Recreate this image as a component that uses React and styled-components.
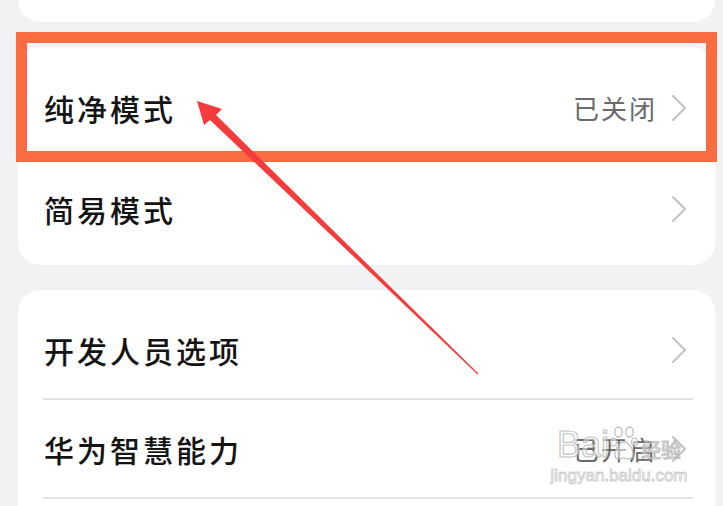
import React from "react";
import styled, { createGlobalStyle } from "styled-components";

const Global = createGlobalStyle`
  html, body { margin: 0; padding: 0; }
  body {
    background: #f1f2f4;
    font-family: "Noto Sans CJK SC", "Noto Sans", sans-serif;
    overflow: hidden;
  }
`;

const Page = styled.div`
  position: relative;
  width: 723px;
  height: 506px;
  overflow: hidden;
  background: #f1f2f4;
  box-sizing: border-box;
  padding: 0 8px 0 18px;
  display: flex;
  flex-direction: column;
  gap: 25px;
`;

const Card = styled.div`
  background: #ffffff;
  border-radius: ${(p) => (p.$cut ? "0 0 22px 22px" : "22px")};
  height: ${(p) => (p.$h ? `${p.$h}px` : "auto")};
  padding: ${(p) => p.$pad || "0"};
  flex-shrink: 0;
  display: flex;
  flex-direction: column;
`;

const Row = styled.div`
  height: ${(p) => p.$h}px;
  display: flex;
  align-items: center;
  padding: 0 28px 0 26px;
  box-sizing: border-box;
`;

const Label = styled.span`
  flex: 1;
  font-size: 30px;
  letter-spacing: 3px;
  color: #141414;
  font-weight: 500;
`;

const Value = styled.span`
  font-size: 26px;
  letter-spacing: 2px;
  color: #6a6a6a;
  margin-right: 14px;
`;

const Divider = styled.div`
  height: 2px;
  background: #e4e4e4;
  margin: 0 22px 0 25px;
`;

const Spacer = styled.div`
  height: 60px;
`;

const Chevron = () => (
  <svg width="16" height="28" viewBox="0 0 16 28" style={{ display: "block" }}>
    <path d="M2 2 L14 14 L2 26" fill="none" stroke="#c2c2c2" strokeWidth="2" strokeLinecap="round" strokeLinejoin="round" />
  </svg>
);

const Highlight = styled.div`
  position: absolute;
  left: 16px;
  top: 32px;
  width: 701px;
  height: 130px;
  box-sizing: border-box;
  border: 11px solid #f96b40;
  pointer-events: none;
`;

const ArrowSvg = styled.svg`
  position: absolute;
  left: 0;
  top: 0;
  pointer-events: none;
`;

const Watermark = styled.div`
  position: absolute;
  left: 553px;
  top: 426px;
  width: 132px;
  display: flex;
  flex-direction: column;
  align-items: center;
  pointer-events: none;
`;

const MarkTop = styled.div`
  display: flex;
  align-items: flex-end;
  gap: 1px;
  font-family: "Liberation Sans", Arial, sans-serif;
  font-size: 36px;
  font-weight: 400;
  line-height: 1;
  color: rgba(255, 255, 255, 0.55);
  -webkit-text-stroke: 1.2px rgba(175, 175, 175, 0.75);
`;

const MarkCn = styled.span`
  font-family: "Noto Sans CJK SC", sans-serif;
  font-size: 20px;
  margin-left: 2px;
  margin-bottom: 3px;
`;

const MarkUrl = styled.div`
  font-family: "Liberation Sans", Arial, sans-serif;
  font-size: 17px;
  line-height: 1;
  margin-top: 4px;
  color: rgba(255, 255, 255, 0.6);
  -webkit-text-stroke: 0.9px rgba(185, 185, 185, 0.75);
`;

const Paw = () => (
  <svg width="28" height="36" viewBox="0 0 28 36" style={{ display: "block", marginBottom: 1 }}>
    <g fill="rgba(255,255,255,0.5)" stroke="rgba(175,175,175,0.8)" strokeWidth="1.3">
      <ellipse cx="8.5" cy="6" rx="3.8" ry="5" />
      <ellipse cx="19.5" cy="6" rx="3.8" ry="5" />
      <ellipse cx="3.5" cy="16" rx="3" ry="4.2" />
      <ellipse cx="24.5" cy="16" rx="3" ry="4.2" />
      <path d="M14 16 C8 16 4 26 5 30 C6 34 11 33 14 32 C17 33 22 34 23 30 C24 26 20 16 14 16 Z" />
    </g>
  </svg>
);

export default function App() {
  return (
    <>
      <Global />
      <Page>
        <Card $cut $h={22} />
        <Card $pad="10px 0 6px 0">
          <Row $h={101}>
            <Label>纯净模式</Label>
            <Value>已关闭</Value>
            <Chevron />
          </Row>
          <Row $h={101}>
            <Label>简易模式</Label>
            <Chevron />
          </Row>
        </Card>
        <Card $pad="11px 0 0 0">
          <Row $h={97}>
            <Label>开发人员选项</Label>
            <Chevron />
          </Row>
          <Divider />
          <Row $h={97}>
            <Label>华为智慧能力</Label>
            <Value>已开启</Value>
            <Chevron />
          </Row>
          <Divider />
          <Spacer />
        </Card>
        <Highlight />
        <ArrowSvg width="723" height="506" viewBox="0 0 723 506">
          <polygon
            points="197,101 222,109 216,115 478.4,373.6 477.6,374.4 210,120 204,125"
            fill="#f53b3b"
          />
        </ArrowSvg>
        <Watermark>
          <MarkTop>
            <span>Bai</span>
            <Paw />
            <MarkCn>经验</MarkCn>
          </MarkTop>
          <MarkUrl>jingyan.baidu.com</MarkUrl>
        </Watermark>
      </Page>
    </>
  );
}
